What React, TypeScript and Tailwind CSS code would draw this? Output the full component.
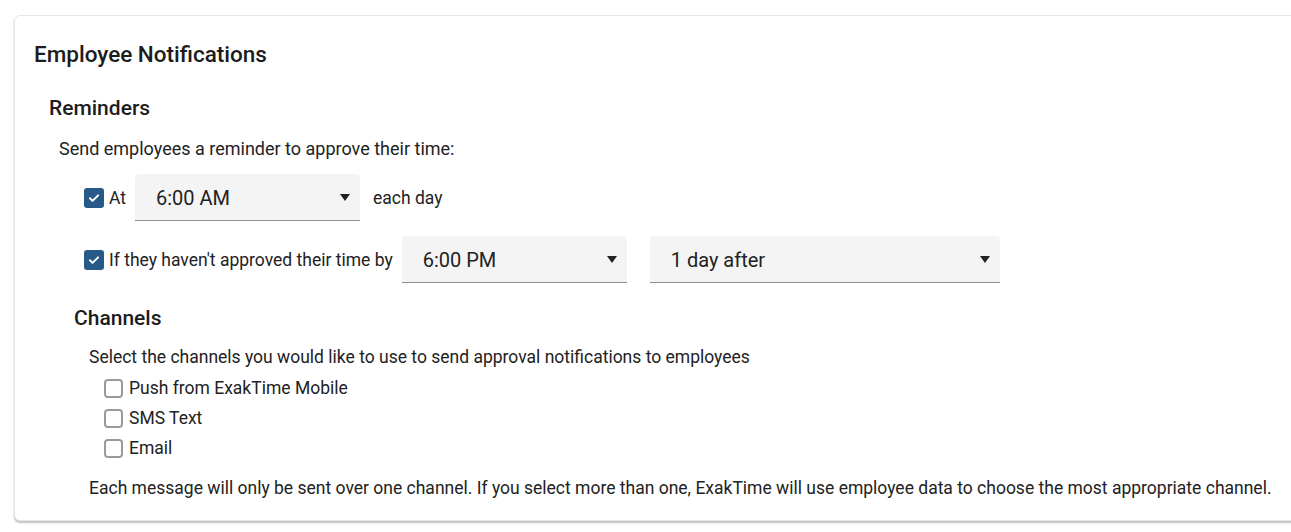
const font = { fontFamily: "Roboto, 'Liberation Sans', sans-serif" }

function CheckedBox() {
	return (
		<span className="flex-none w-[20px] h-[20px] rounded-[3px] bg-[#275a88] flex items-center justify-center">
			<svg width="14" height="14" viewBox="0 0 24 24" fill="none" stroke="white" strokeWidth="3.4" strokeLinecap="round" strokeLinejoin="round">
				<path d="M5 12.5l4.5 4.5L19 7.5" />
			</svg>
		</span>
	)
}

function EmptyBox() {
	return <span className="flex-none w-[19px] h-[19px] rounded-[4px] border-2 border-[#9a9a9a] bg-white" />
}

function Select({ value, width }: { value: string; width: string }) {
	return (
		<div
			className={`${width} h-[47px] flex items-center justify-between bg-[#f4f4f4] rounded-t-[4px] border-b border-[#8f8f8f] pl-[21px] pr-[10px] pt-[1px] text-[20px] text-[#222]`}
		>
			<span>{value}</span>
			<svg width="10" height="7" viewBox="0 0 10 7">
				<path d="M0 0h10L5 7z" fill="#222" />
			</svg>
		</div>
	)
}

export default function App() {
	return (
		<div className="w-[1291px] h-[532px] bg-white overflow-hidden pt-[15px] pl-[14px]" style={font}>
			<div className="w-[1300px] h-[506px] bg-white border border-[#e6e6e6] rounded-l-[6px] shadow-[0_2px_2px_rgba(0,0,0,0.25)] pl-[19px] pt-[23px] text-[#222]">
				<h1 className="text-[22.5px] font-medium leading-[30px] text-[#1c1c1c]">Employee Notifications</h1>

				<div className="pl-[15px] mt-[27px]">
					<h2 className="text-[21px] font-medium leading-[24px] text-[#1c1c1c]">Reminders</h2>
					<div className="pl-[10px] mt-[19px]">
						<p className="text-[18px] leading-[20px]">Send employees a reminder to approve their time:</p>
						<div className="pl-[25px] mt-[15px]">
							<div className="flex items-center h-[47px]">
								<CheckedBox />
								<span className="ml-[5px] pt-[1px] text-[17.5px]">At</span>
								<div className="ml-[9px]">
									<Select value="6:00 AM" width="w-[225px]" />
								</div>
								<span className="ml-[13px] pt-[1px] text-[17.5px]">each day</span>
							</div>
							<div className="flex items-center h-[47px] mt-[15px]">
								<CheckedBox />
								<span className="ml-[5px] pt-[1px] text-[17.5px]">If they haven't approved their time by</span>
								<div className="ml-[9px]">
									<Select value="6:00 PM" width="w-[225px]" />
								</div>
								<div className="ml-[23px]">
									<Select value="1 day after" width="w-[350px]" />
								</div>
							</div>
						</div>
					</div>

					<div className="pl-[25px] mt-[23px]">
						<h2 className="text-[21px] font-medium leading-[24px] text-[#1c1c1c]">Channels</h2>
						<div className="pl-[15px] mt-[17px]">
							<p className="text-[17.5px] leading-[20px]">
								Select the channels you would like to use to send approval notifications to employees
							</p>
							<div className="pl-[15px] mt-[6px] flex flex-col">
								{["Push from ExakTime Mobile", "SMS Text", "Email"].map((label) => (
									<div key={label} className="flex items-center h-[30px]">
										<EmptyBox />
										<span className="ml-[6px] text-[17.5px]">{label}</span>
									</div>
								))}
							</div>
							<p className="text-[17.5px] leading-[20px] mt-[15px]">
								Each message will only be sent over one channel. If you select more than one, ExakTime will use employee data to choose the most appropriate channel.
							</p>
						</div>
					</div>
				</div>
			</div>
		</div>
	)
}
